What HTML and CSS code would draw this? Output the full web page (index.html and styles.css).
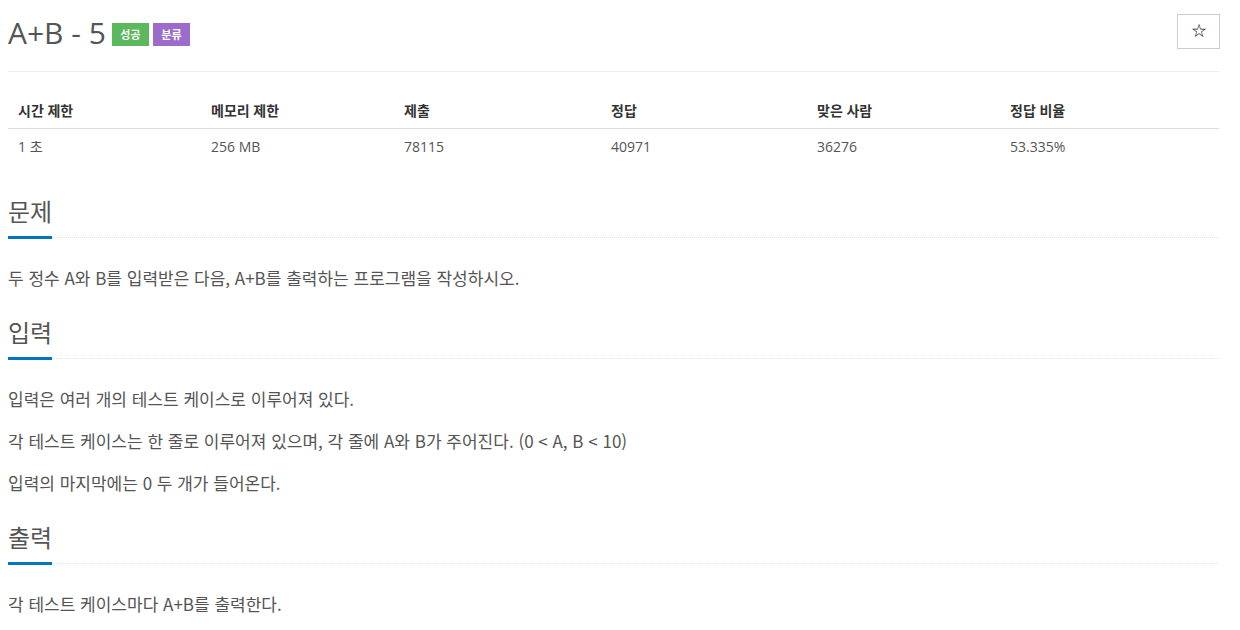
FILE: index.html
```html
<!DOCTYPE html>
<html lang="ko">
<head>
<meta charset="UTF-8">
<meta name="viewport" content="width=device-width, initial-scale=1.0">
<link rel="stylesheet" href="styles.css">
<title>A+B - 5</title>
</head>
<body>
  <div class="container">
    <div class="page-header">
      <h1>
        <span class="title">A+B - 5</span>
        <span class="label label-success">성공</span>
        <span class="label label-purple">분류</span>
      </h1>
      <button class="btn-star">&#9734;</button>
    </div>

    <table class="problem-info">
      <thead>
        <tr>
          <th>시간 제한</th>
          <th>메모리 제한</th>
          <th>제출</th>
          <th>정답</th>
          <th>맞은 사람</th>
          <th>정답 비율</th>
        </tr>
      </thead>
      <tbody>
        <tr>
          <td>1 초</td>
          <td>256 MB</td>
          <td>78115</td>
          <td>40971</td>
          <td>36276</td>
          <td>53.335%</td>
        </tr>
      </tbody>
    </table>

    <section class="problem-section">
      <div class="headline"><h2>문제</h2></div>
      <div class="problem-text">
        <p>두 정수 A와 B를 입력받은 다음, A+B를 출력하는 프로그램을 작성하시오.</p>
      </div>
    </section>

    <section class="problem-section">
      <div class="headline"><h2>입력</h2></div>
      <div class="problem-text">
        <p>입력은 여러 개의 테스트 케이스로 이루어져 있다.</p>
        <p>각 테스트 케이스는 한 줄로 이루어져 있으며, 각 줄에 A와 B가 주어진다. (0 &lt; A, B &lt; 10)</p>
        <p>입력의 마지막에는 0 두 개가 들어온다.</p>
      </div>
    </section>

    <section class="problem-section">
      <div class="headline"><h2>출력</h2></div>
      <div class="problem-text">
        <p>각 테스트 케이스마다 A+B를 출력한다.</p>
      </div>
    </section>
  </div>
</body>
</html>
```

FILE: styles.css
```css
body {
  margin: 0;
  background: #fff;
  font-family: "Open Sans", "Noto Sans CJK KR", sans-serif;
  color: #333;
}

.container {
  width: 1211px;
  margin-left: 8px;
}

/* 제목 영역 */
.page-header {
  display: flex;
  justify-content: space-between;
  align-items: flex-start;
  border-bottom: 1px solid #eee;
  padding-top: 14px;
  height: 57px;
}

.page-header h1 {
  margin: 0;
  font-size: 30px;
  font-weight: 400;
  color: #555;
  line-height: 38px;
  display: flex;
  align-items: center;
}

.title {
  margin-right: 6px;
}

.label {
  display: inline-block;
  font-family: "Noto Sans CJK KR", sans-serif;
  font-size: 11px;
  font-weight: 700;
  color: #fff;
  width: 37px;
  height: 23px;
  line-height: 23px;
  text-align: center;
  margin-right: 4px;
  margin-top: 3px;
}

.label-success {
  background-color: #5cb85c;
}

.label-purple {
  background-color: #9b6ccc;
}

.btn-star {
  width: 43px;
  height: 35px;
  border: 1px solid #ccc;
  background: #fff;
  font-size: 16px;
  color: #222;
  padding: 0;
  margin-right: -1px;
}

/* 문제 정보 테이블 */
.problem-info {
  width: 100%;
  table-layout: fixed;
  border-collapse: collapse;
  margin-top: 20px;
  font-size: 14px;
}

.problem-info th,
.problem-info td {
  text-align: left;
  padding: 8px 10px;
  line-height: 20px;
}

.problem-info th {
  font-weight: 700;
  border-bottom: 1px solid #ddd;
  padding-top: 9px;
  padding-bottom: 7px;
}

/* 너비는 padding(20px)을 뺀 값 */
.problem-info th:nth-child(1) { width: 173px; }
.problem-info th:nth-child(2) { width: 173px; }
.problem-info th:nth-child(3) { width: 187px; }
.problem-info th:nth-child(4) { width: 186px; }
.problem-info th:nth-child(5) { width: 173px; }

.problem-info td {
  color: #555;
}

/* 문제 본문 */
.problem-section {
  margin-top: 25px;
}

.problem-section:first-of-type {
  margin-top: 29px;
}

.headline {
  border-bottom: 1px dotted #e4e4e4;
  margin-bottom: 27px;
}

.headline h2 {
  display: inline-block;
  margin: 0 0 -2px;
  font-family: "Noto Sans CJK KR", sans-serif;
  font-size: 24px;
  font-weight: 400;
  color: #555;
  line-height: 34px;
  padding-bottom: 8px;
  border-bottom: 3px solid #0076c0;
}

.problem-text {
  font-family: "Noto Sans CJK KR", sans-serif;
  font-size: 17px;
  color: #555;
}

.problem-text p {
  margin: 0 0 17px;
  line-height: 25px;
}
```
